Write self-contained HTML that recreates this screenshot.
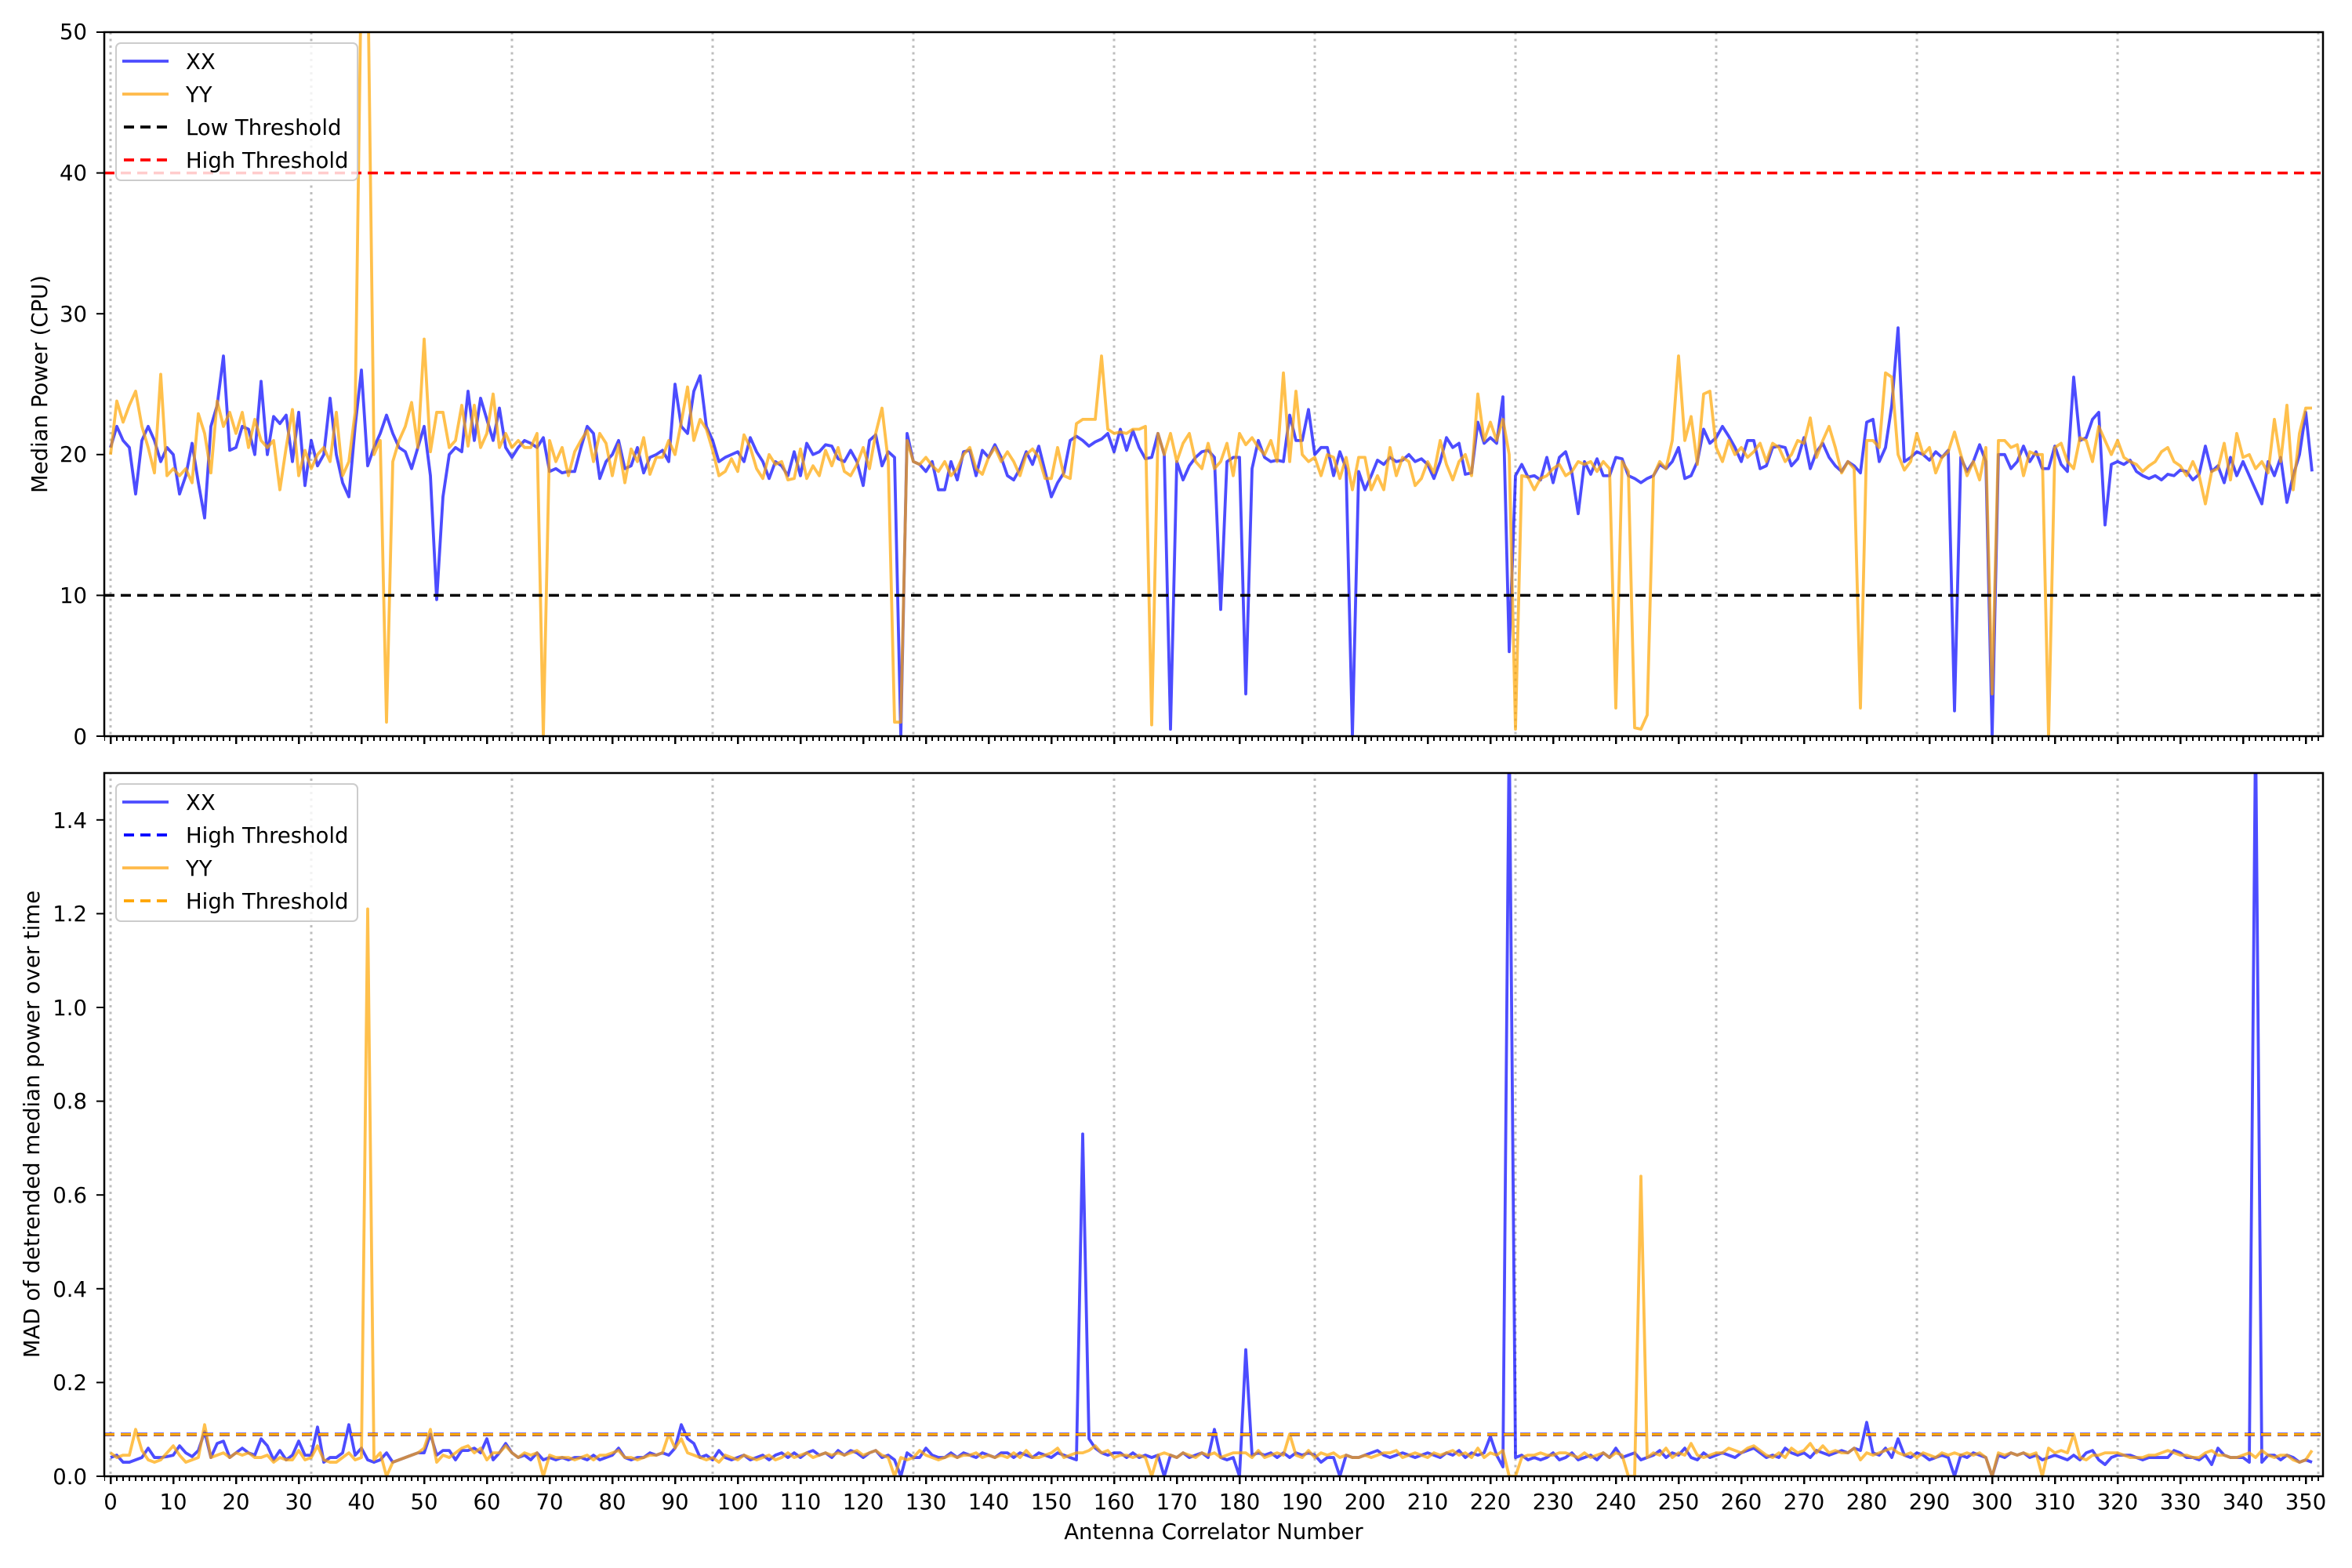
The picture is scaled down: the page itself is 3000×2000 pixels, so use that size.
<!DOCTYPE html>
<html><head><meta charset="utf-8"><style>
html,body{margin:0;padding:0;background:#fff;}
svg{display:block;font-family:"DejaVu Sans","Liberation Sans",sans-serif;}
</style></head><body>
<svg width="3000" height="2000" viewBox="0 0 3000 2000" xmlns="http://www.w3.org/2000/svg">
<defs>
<clipPath id="c1"><rect x="133" y="41" width="2830" height="898"/></clipPath>
<clipPath id="c2"><rect x="133" y="986" width="2830" height="897"/></clipPath>
<pattern id="grid" x="139.5" y="41" width="256" height="8.5" patternUnits="userSpaceOnUse"><rect x="0" y="0" width="3" height="3" fill="#bdbdbd"/></pattern>
<pattern id="minor" x="140" y="0" width="8" height="20" patternUnits="userSpaceOnUse"><rect x="0" y="0" width="2" height="20" fill="#000"/></pattern>
<pattern id="major" x="140" y="0" width="80" height="20" patternUnits="userSpaceOnUse"><rect x="0" y="0" width="2.5" height="20" fill="#000"/></pattern>
</defs>
<rect width="3000" height="2000" fill="#fff"/>
<!-- grid -->
<rect x="133" y="41" width="2830" height="898" fill="url(#grid)"/>
<rect x="133" y="986" width="2830" height="897" fill="url(#grid)"/>
<!-- ticks -->
<rect x="133" y="939" width="2830" height="6" fill="url(#minor)"/>
<rect x="133" y="939" width="2830" height="10" fill="url(#major)"/>
<rect x="133" y="1883" width="2830" height="6" fill="url(#minor)"/>
<rect x="133" y="1883" width="2830" height="10" fill="url(#major)"/>
<g stroke="#000" stroke-width="2">
<line x1="123" y1="41" x2="133" y2="41"/><line x1="123" y1="220.6" x2="133" y2="220.6"/><line x1="123" y1="400.2" x2="133" y2="400.2"/>
<line x1="123" y1="579.8" x2="133" y2="579.8"/><line x1="123" y1="759.4" x2="133" y2="759.4"/><line x1="123" y1="939" x2="133" y2="939"/>
<line x1="123" y1="1883" x2="133" y2="1883"/><line x1="123" y1="1763.4" x2="133" y2="1763.4"/><line x1="123" y1="1643.8" x2="133" y2="1643.8"/>
<line x1="123" y1="1524.2" x2="133" y2="1524.2"/><line x1="123" y1="1404.6" x2="133" y2="1404.6"/><line x1="123" y1="1285" x2="133" y2="1285"/>
<line x1="123" y1="1165.4" x2="133" y2="1165.4"/><line x1="123" y1="1045.8" x2="133" y2="1045.8"/>
</g>

<!-- top data -->
<g clip-path="url(#c1)">
<g transform="translate(141,939) scale(8,-17.96)" fill="none" stroke-width="3.8" stroke-linejoin="round" stroke-opacity="0.7">
<polyline vector-effect="non-scaling-stroke" stroke="#0000ff" points="0,20.5 1,22 2,21 3,20.5 4,17.2 5,21 6,22 7,21 8,19.5 9,20.5 10,20 11,17.2 12,18.5 13,20.8 14,18 15,15.5 16,22 17,23.5 18,27 19,20.3 20,20.5 21,22 22,21.8 23,20 24,25.2 25,20 26,22.7 27,22.2 28,22.8 29,19.5 30,23 31,17.8 32,21 33,19.2 34,20 35,24 36,20 37,18 38,17 39,22 40,26 41,19.2 42,20.5 43,21.5 44,22.8 45,21.5 46,20.5 47,20.2 48,19 49,20.5 50,22 51,18.5 52,9.7 53,17 54,20 55,20.5 56,20.2 57,24.5 58,21 59,24 60,22.5 61,21 62,23.3 63,20.5 64,19.8 65,20.5 66,21 67,20.8 68,20.5 69,21.2 70,18.8 71,19 72,18.7 73,18.8 74,18.8 75,20.5 76,22 77,21.5 78,18.3 79,19.5 80,20 81,21 82,19 83,19.2 84,20.5 85,18.7 86,19.8 87,20 88,20.3 89,19.5 90,25 91,22 92,21.5 93,24.5 94,25.6 95,22 96,21 97,19.5 98,19.8 99,20 100,20.2 101,19.5 102,21.2 103,20.2 104,19.5 105,18.3 106,19.5 107,19.2 108,18.5 109,20.2 110,18.5 111,20.8 112,20 113,20.2 114,20.7 115,20.6 116,19.7 117,19.5 118,20.3 119,19.5 120,17.8 121,21 122,21.4 123,19.2 124,20.2 125,19.8 126,0 127,21.5 128,19.5 129,19.3 130,18.8 131,19.5 132,17.5 133,17.5 134,19.5 135,18.2 136,20.2 137,20.3 138,18.5 139,20.3 140,19.8 141,20.7 142,19.8 143,18.5 144,18.2 145,19 146,20.2 147,19.3 148,20.6 149,18.8 150,17 151,18 152,18.7 153,21 154,21.3 155,21 156,20.6 157,20.9 158,21.1 159,21.5 160,20.2 161,21.8 162,20.3 163,21.7 164,20.5 165,19.7 166,19.8 167,21.5 168,20 169,0.5 170,19.5 171,18.2 172,19.2 173,19.8 174,20.2 175,20.3 176,19.8 177,9 178,19.5 179,19.8 180,19.8 181,3 182,19 183,21 184,19.8 185,19.5 186,19.6 187,19.5 188,22.8 189,21 190,21 191,23.2 192,20 193,20.5 194,20.5 195,18.5 196,20.2 197,19 198,0 199,18.8 200,17.5 201,18.5 202,19.6 203,19.3 204,19.8 205,19.5 206,19.6 207,20 208,19.5 209,19.7 210,19.3 211,18.3 212,19.5 213,21.2 214,20.5 215,20.8 216,18.6 217,18.7 218,22.3 219,20.8 220,21.2 221,20.8 222,24.1 223,6 224,18.5 225,19.3 226,18.4 227,18.5 228,18.2 229,19.8 230,18 231,19.8 232,20.2 233,18.7 234,15.8 235,19.5 236,18.6 237,19.7 238,18.5 239,18.5 240,19.8 241,19.7 242,18.5 243,18.3 244,18 245,18.3 246,18.5 247,19.3 248,19 249,19.5 250,20.5 251,18.3 252,18.5 253,19.5 254,21.8 255,20.8 256,21.2 257,22 258,21.3 259,20.5 260,19.5 261,21 262,21 263,19 264,19.2 265,20.5 266,20.6 267,20.5 268,19.2 269,19.7 270,21.2 271,19 272,20.2 273,20.8 274,19.8 275,19.2 276,18.8 277,19.5 278,19.2 279,18.7 280,22.3 281,22.5 282,19.5 283,20.5 284,23.5 285,29 286,19.5 287,19.8 288,20.2 289,20 290,19.6 291,20.2 292,19.8 293,20.3 294,1.8 295,19.8 296,18.8 297,19.5 298,20.7 299,19.5 300,0 301,20 302,20 303,19 304,19.5 305,20.6 306,19.5 307,20.2 308,19 309,19 310,20.6 311,19.3 312,18.8 313,25.5 314,21 315,21.2 316,22.5 317,23 318,15 319,19.3 320,19.5 321,19.3 322,19.6 323,18.8 324,18.5 325,18.3 326,18.5 327,18.2 328,18.6 329,18.5 330,18.9 331,18.8 332,18.2 333,18.6 334,20.6 335,18.8 336,19.2 337,18 338,19.8 339,18.5 340,19.5 341,18.5 342,17.5 343,16.5 344,19.5 345,18.5 346,19.8 347,16.6 348,18.5 349,20 350,23 351,18.8"/>
<polyline vector-effect="non-scaling-stroke" stroke="#ffa500" points="0,20 1,23.8 2,22.3 3,23.5 4,24.5 5,22 6,20.5 7,18.7 8,25.7 9,18.5 10,19 11,18.5 12,19 13,18 14,22.9 15,21.5 16,18.7 17,23.8 18,22 19,23 20,21.5 21,23 22,20.5 23,22.5 24,21 25,20.5 26,21 27,17.5 28,20.5 29,23.2 30,18.5 31,20.3 32,19 33,20 34,20.5 35,19.5 36,23 37,18.5 38,19.5 39,23 40,55 41,55 42,20 43,21 44,1 45,19.5 46,21 47,22 48,23.7 49,20.5 50,28.2 51,20.2 52,23 53,23 54,20.5 55,21 56,23.5 57,20.6 58,23.5 59,20.5 60,21.5 61,24.3 62,20.5 63,21.5 64,20.5 65,21 66,20.5 67,20.5 68,21.5 69,0 70,21 71,19.5 72,20.5 73,18.5 74,20.2 75,21 76,21.7 77,19.5 78,21.5 79,20.8 80,18.5 81,20.7 82,18 83,20.4 84,19.5 85,21.2 86,18.6 87,19.8 88,19.8 89,21 90,20 91,22.3 92,24.8 93,21 94,22.5 95,21.8 96,20.3 97,18.5 98,18.8 99,19.7 100,18.8 101,21.4 102,20.5 103,19 104,18.3 105,20 106,19.3 107,19.5 108,18.2 109,18.3 110,20.4 111,18.3 112,19.2 113,18.5 114,20.3 115,19.2 116,20.5 117,18.8 118,18.5 119,19.3 120,20.5 121,19 122,21.5 123,23.3 124,19.5 125,1 126,1 127,21 128,19.5 129,19.3 130,19.8 131,19.2 132,18.8 133,19.5 134,18.5 135,19 136,20 137,20.5 138,19 139,18.6 140,19.8 141,20.5 142,19.5 143,20.2 144,19.5 145,18.5 146,20 147,20.4 148,19.8 149,18.3 150,18.3 151,20.5 152,18.5 153,18.3 154,22.2 155,22.5 156,22.5 157,22.5 158,27 159,21.8 160,21.5 161,21.6 162,21.5 163,21.8 164,21.8 165,22 166,0.8 167,21.5 168,20 169,21.5 170,19.5 171,20.8 172,21.5 173,19.5 174,19 175,20.8 176,19 177,19.5 178,20.8 179,18.5 180,21.5 181,20.7 182,21.2 183,20.5 184,20 185,21 186,19.5 187,25.8 188,19.5 189,24.5 190,20 191,19.5 192,19.8 193,18.5 194,20 195,19.8 196,18.3 197,19.8 198,17.5 199,19.8 200,19.8 201,17.5 202,18.5 203,17.5 204,20.5 205,18.5 206,19.8 207,19.5 208,17.8 209,18.3 210,19.5 211,18.7 212,21 213,19.3 214,18.2 215,19.5 216,20 217,18.5 218,24.3 219,21 220,22.3 221,21 222,22.5 223,20 224,0.5 225,18.5 226,18.4 227,17.5 228,18.3 229,18.5 230,19 231,19.3 232,18.5 233,18.8 234,19.5 235,19.3 236,19.5 237,18.8 238,19.5 239,19 240,2 241,19.5 242,18.8 243,0.6 244,0.5 245,1.5 246,18.5 247,19.5 248,19 249,21 250,27 251,21 252,22.7 253,19.3 254,24.3 255,24.5 256,20.5 257,19.5 258,21 259,20 260,20.5 261,19.8 262,20.2 263,20.8 264,19.5 265,20.8 266,20.5 267,19.5 268,20 269,21 270,20.8 271,22.6 272,19.8 273,21 274,22 275,20.5 276,18.7 277,19.5 278,19 279,2 280,21 281,21 282,20.5 283,25.8 284,25.5 285,20 286,18.9 287,19.5 288,21.5 289,20 290,20.5 291,18.7 292,19.8 293,20.2 294,21.6 295,20 296,18.5 297,19.5 298,18.2 299,20.5 300,3 301,21 302,21 303,20.5 304,20.7 305,18.5 306,20.2 307,20 308,20 309,0 310,20.5 311,20.8 312,19.5 313,19 314,21.2 315,21 316,19.5 317,22 318,21 319,20 320,21 321,19.8 322,19.5 323,19.3 324,18.8 325,19.2 326,19.5 327,20.2 328,20.5 329,19.5 330,19.2 331,18.5 332,19.5 333,18.5 334,16.5 335,18.8 336,19 337,20.8 338,18.2 339,21.5 340,19.8 341,20 342,19 343,19.5 344,18.7 345,22.5 346,19.5 347,23.5 348,17.5 349,21.5 350,23.3 351,23.3"/>
</g>
<line x1="133" y1="759.4" x2="2963" y2="759.4" stroke="#000" stroke-width="3.5" stroke-dasharray="13 8"/>
<line x1="133" y1="220.6" x2="2963" y2="220.6" stroke="#f00" stroke-width="3.5" stroke-dasharray="13 8"/>
</g>

<!-- bottom data -->
<g clip-path="url(#c2)">
<g transform="translate(141,1883) scale(8,-5.98)" fill="none" stroke-width="3.8" stroke-linejoin="round" stroke-opacity="0.7">
<polyline vector-effect="non-scaling-stroke" stroke="#0000ff" points="0,4 1,4.5 2,3 3,3 4,3.5 5,4 6,6 7,4 8,4 9,4.2 10,4.5 11,6.5 12,5 13,4.2 14,5.5 15,9.5 16,4 17,7 18,7.5 19,4 20,5 21,6 22,5 23,4.5 24,8 25,6.5 26,3.5 27,5.5 28,3.5 29,4.5 30,7.5 31,4.5 32,4.5 33,10.5 34,3 35,4 36,4 37,5 38,11 39,4.5 40,6 41,3.5 42,3 43,3.5 44,5 45,3 46,3.5 47,4 48,4.5 49,5 50,5 51,9 52,4.5 53,5.5 54,5.5 55,3.5 56,5.5 57,5.5 58,6 59,5 60,8 61,3.5 62,5 63,7 64,5 65,4 66,4.5 67,3.5 68,5 69,3.5 70,4 71,3.5 72,4 73,3.5 74,4 75,4 76,3.5 77,4.5 78,3.5 79,4 80,4.5 81,6 82,4 83,3.5 84,4 85,4 86,5 87,4.5 88,5 89,4.5 90,6 91,11 92,8 93,7 94,4 95,4.5 96,3.5 97,5.5 98,4 99,3.5 100,4 101,4.5 102,3.5 103,4 104,4.5 105,3.5 106,4.5 107,5 108,4 109,5 110,4 111,5 112,5.5 113,4.5 114,5 115,4 116,5.5 117,4.5 118,5.5 119,5 120,4 121,5 122,5.5 123,4 124,4.5 125,3.5 126,0 127,5 128,4 129,4 130,6 131,4.5 132,4 133,4 134,5 135,4 136,5 137,4.5 138,4 139,5 140,4.5 141,4 142,5 143,5 144,4 145,5 146,4.5 147,4 148,5 149,4.5 150,4 151,5 152,4.5 153,4 154,3.5 155,73 156,8 157,6 158,5 159,4.5 160,5 161,5 162,4 163,5 164,4 165,4.5 166,4 167,4.5 168,0 169,4.5 170,4 171,5 172,4 173,4.5 174,5 175,4 176,10 177,4 178,3.5 179,4 180,0 181,27 182,4.5 183,5 184,4.5 185,5 186,4 187,5 188,4 189,5 190,4.5 191,5 192,4.5 193,3 194,4 195,4 196,0 197,4.5 198,4 199,4 200,4.5 201,5 202,5.5 203,4.5 204,4 205,4.5 206,5 207,4.5 208,4 209,4.5 210,5 211,4.5 212,4 213,5 214,4.5 215,5.5 216,4 217,5 218,4.5 219,5 220,8.5 221,4.5 222,2 223,160 224,4 225,4.5 226,3.5 227,4 228,3.5 229,4 230,5 231,3.5 232,4 233,5 234,3.5 235,4 236,4.5 237,3.5 238,5 239,4 240,6 241,4 242,4.5 243,5 244,3.5 245,4 246,4.5 247,5.5 248,4 249,5 250,4.5 251,6 252,4 253,3.5 254,5 255,4 256,4.5 257,5 258,4.5 259,4 260,5 261,5.5 262,6 263,5 264,4 265,4.5 266,4 267,6 268,5 269,4.5 270,5 271,4 272,5.5 273,5 274,4.5 275,5 276,5.5 277,5 278,6 279,5.5 280,11.5 281,5 282,4.5 283,6 284,4 285,8 286,4.5 287,4 288,5 289,4.5 290,3.5 291,4 292,4.5 293,4 294,0 295,4.5 296,4 297,5 298,4.5 299,4 300,0 301,4.5 302,4 303,5 304,4.5 305,5 306,4 307,4.5 308,3.5 309,4 310,4.5 311,4 312,3.5 313,4.5 314,3.5 315,5 316,5.5 317,3.5 318,2.5 319,4 320,4.5 321,4.5 322,4.5 323,4 324,3.5 325,4 326,4 327,4 328,4 329,5.5 330,5 331,4 332,4 333,3.5 334,4.5 335,2.5 336,6 337,4.5 338,4 339,4 340,4 341,3 342,160 343,3 344,4.5 345,4.5 346,3.5 347,4.5 348,4 349,3 350,3.5 351,3"/>
<polyline vector-effect="non-scaling-stroke" stroke="#ffa500" points="0,5 1,4 2,4.5 3,4.5 4,10 5,5.5 6,3.5 7,3 8,3.5 9,5 10,6.5 11,4.5 12,3 13,3.5 14,4 15,11 16,4 17,4.5 18,5 19,4 20,5 21,4.5 22,5 23,4 24,4 25,4.5 26,3 27,4 28,3.5 29,3.5 30,5.5 31,3.5 32,4 33,6.5 34,3.5 35,3 36,3 37,4 38,5 39,3.5 40,4 41,121 42,3.5 43,5 44,0 45,3 46,3.5 47,4 48,4.5 49,5 50,6 51,10 52,3 53,4.5 54,4 55,5 56,6 57,6.5 58,5 59,6 60,3.5 61,5 62,5 63,6.5 64,5 65,4 66,5 67,4.5 68,5 69,0 70,4.5 71,4 72,4 73,4 74,3.5 75,4 76,4.5 77,3.5 78,4.5 79,4.5 80,5 81,5.5 82,4 83,4 84,3.5 85,4 86,4.5 87,4.5 88,5 89,9 90,6 91,8 92,5 93,4.5 94,4 95,3.5 96,4 97,3 98,4.5 99,4 100,3.5 101,4.5 102,4 103,3.5 104,4 105,4.5 106,3.5 107,4 108,5 109,4 110,4.5 111,5 112,4 113,4.5 114,5 115,4.5 116,5 117,4.5 118,5 119,5.5 120,4.5 121,5 122,5.5 123,4.5 124,4 125,0 126,4 127,3.5 128,4 129,5.5 130,4.5 131,4 132,3.5 133,4 134,4.5 135,4 136,4.5 137,4.5 138,5 139,4 140,4.5 141,4 142,4.5 143,4 144,5 145,4 146,5.5 147,4 148,4 149,4.5 150,5 151,6 152,4 153,4.5 154,5 155,5 156,5.5 157,6.5 158,5 159,5.5 160,4 161,4.5 162,4.5 163,4 164,4.5 165,4 166,0 167,4.5 168,5 169,4.5 170,4 171,5 172,4.5 173,4 174,5 175,4.5 176,5 177,4 178,4.5 179,5 180,5 181,5 182,4 183,5.5 184,4 185,4.5 186,5 187,4.5 188,9 189,4.5 190,4 191,5.5 192,4 193,5 194,4.5 195,5 196,4 197,4.5 198,4 199,4 200,4.5 201,4 202,4.5 203,5 204,5 205,5.5 206,4 207,4.5 208,5 209,4.5 210,4 211,5 212,4.5 213,5 214,5.5 215,4.5 216,5 217,4 218,6 219,4 220,5 221,4.5 222,5.5 223,0 224,0 225,4 226,4.5 227,4.5 228,5 229,4.5 230,4.5 231,5 232,5 233,4.5 234,4 235,5 236,4 237,4.5 238,5 239,4 240,5 241,4.5 242,0 243,0 244,64 245,4 246,5 247,4.5 248,6 249,4 250,5 251,4.5 252,7 253,4.5 254,4 255,4.5 256,5 257,5 258,6 259,5.5 260,5 261,6 262,6.5 263,5.5 264,4.5 265,4 266,5 267,4 268,6 269,5 270,5.5 271,7 272,5 273,6.5 274,5 275,5.5 276,5 277,5 278,6 279,3.5 280,5 281,4.5 282,5 283,5.5 284,6 285,5 286,4.5 287,5 288,4 289,5 290,4.5 291,4 292,5 293,4.5 294,5 295,4.5 296,5 297,4.5 298,5 299,4 300,0 301,5 302,4.5 303,5 304,4.5 305,5 306,4.5 307,5 308,0 309,6 310,5 311,5.5 312,5 313,9 314,4 315,3.5 316,4.5 317,4.5 318,5 319,5 320,5 321,4.5 322,4 323,4 324,4 325,4.5 326,4.5 327,5 328,5.5 329,5 330,4.5 331,4.5 332,4 333,4 334,5 335,5.5 336,4.5 337,4.5 338,4 339,4 340,4.5 341,5 342,4 343,5.5 344,4.5 345,4 346,4.5 347,4.5 348,3.5 349,3 350,3.5 351,5.5"/>
</g>
<line x1="133" y1="1829.8" x2="2963" y2="1829.8" stroke="#00f" stroke-width="4.5" stroke-dasharray="13 8"/>
<line x1="133" y1="1829.8" x2="2963" y2="1829.8" stroke="#ffa500" stroke-width="3.5" stroke-dasharray="13 8"/>
</g>

<rect x="133" y="41" width="2830" height="898" fill="none" stroke="#000" stroke-width="2.5"/>
<rect x="133" y="986" width="2830" height="897" fill="none" stroke="#000" stroke-width="2.5"/>

<g font-size="27.5" text-anchor="end" fill="#000">
<text x="111" y="50">50</text><text x="111" y="230">40</text><text x="111" y="410">30</text>
<text x="111" y="589">20</text><text x="111" y="769">10</text><text x="111" y="949">0</text>
<text x="111" y="1893">0.0</text><text x="111" y="1773">0.2</text><text x="111" y="1654">0.4</text>
<text x="111" y="1534">0.6</text><text x="111" y="1414">0.8</text><text x="111" y="1295">1.0</text>
<text x="111" y="1175">1.2</text><text x="111" y="1056">1.4</text>
</g>
<g font-size="27.5" text-anchor="middle" fill="#000">
<text x="141" y="1925">0</text><text x="221" y="1925">10</text><text x="301" y="1925">20</text><text x="381" y="1925">30</text>
<text x="461" y="1925">40</text><text x="541" y="1925">50</text><text x="621" y="1925">60</text><text x="701" y="1925">70</text>
<text x="781" y="1925">80</text><text x="861" y="1925">90</text><text x="941" y="1925">100</text><text x="1021" y="1925">110</text>
<text x="1101" y="1925">120</text><text x="1181" y="1925">130</text><text x="1261" y="1925">140</text><text x="1341" y="1925">150</text>
<text x="1421" y="1925">160</text><text x="1501" y="1925">170</text><text x="1581" y="1925">180</text><text x="1661" y="1925">190</text>
<text x="1741" y="1925">200</text><text x="1821" y="1925">210</text><text x="1901" y="1925">220</text><text x="1981" y="1925">230</text>
<text x="2061" y="1925">240</text><text x="2141" y="1925">250</text><text x="2221" y="1925">260</text><text x="2301" y="1925">270</text>
<text x="2381" y="1925">280</text><text x="2461" y="1925">290</text><text x="2541" y="1925">300</text><text x="2621" y="1925">310</text>
<text x="2701" y="1925">320</text><text x="2781" y="1925">330</text><text x="2861" y="1925">340</text><text x="2941" y="1925">350</text>
<text x="1548" y="1963">Antenna Correlator Number</text>
<text transform="translate(60,490) rotate(-90)">Median Power (CPU)</text>
<text transform="translate(50,1434) rotate(-90)">MAD of detrended median power over time</text>
</g>

<!-- legend 1 -->
<rect x="148" y="55" width="308" height="175" rx="6" fill="rgba(255,255,255,0.8)" stroke="#cccccc" stroke-width="2"/>
<line x1="156" y1="78" x2="215" y2="78" stroke="#4c4cff" stroke-width="3.8"/>
<line x1="156" y1="120" x2="215" y2="120" stroke="#ffba4a" stroke-width="3.8"/>
<line x1="158" y1="162" x2="215" y2="162" stroke="#000" stroke-width="3.8" stroke-dasharray="13 8"/>
<line x1="158" y1="204" x2="215" y2="204" stroke="#f00" stroke-width="3.8" stroke-dasharray="13 8"/>
<g font-size="27.5" fill="#000">
<text x="237" y="88">XX</text><text x="237" y="130">YY</text>
<text x="237" y="172">Low Threshold</text><text x="237" y="214">High Threshold</text>
</g>
<!-- legend 2 -->
<rect x="148" y="1000" width="308" height="175" rx="6" fill="rgba(255,255,255,0.8)" stroke="#cccccc" stroke-width="2"/>
<line x1="156" y1="1023" x2="215" y2="1023" stroke="#4c4cff" stroke-width="3.8"/>
<line x1="158" y1="1065" x2="215" y2="1065" stroke="#00f" stroke-width="3.8" stroke-dasharray="13 8"/>
<line x1="156" y1="1107" x2="215" y2="1107" stroke="#ffba4a" stroke-width="3.8"/>
<line x1="158" y1="1149" x2="215" y2="1149" stroke="#ffa500" stroke-width="3.8" stroke-dasharray="13 8"/>
<g font-size="27.5" fill="#000">
<text x="237" y="1033">XX</text><text x="237" y="1075">High Threshold</text>
<text x="237" y="1117">YY</text><text x="237" y="1159">High Threshold</text>
</g>
</svg>
</body></html>
